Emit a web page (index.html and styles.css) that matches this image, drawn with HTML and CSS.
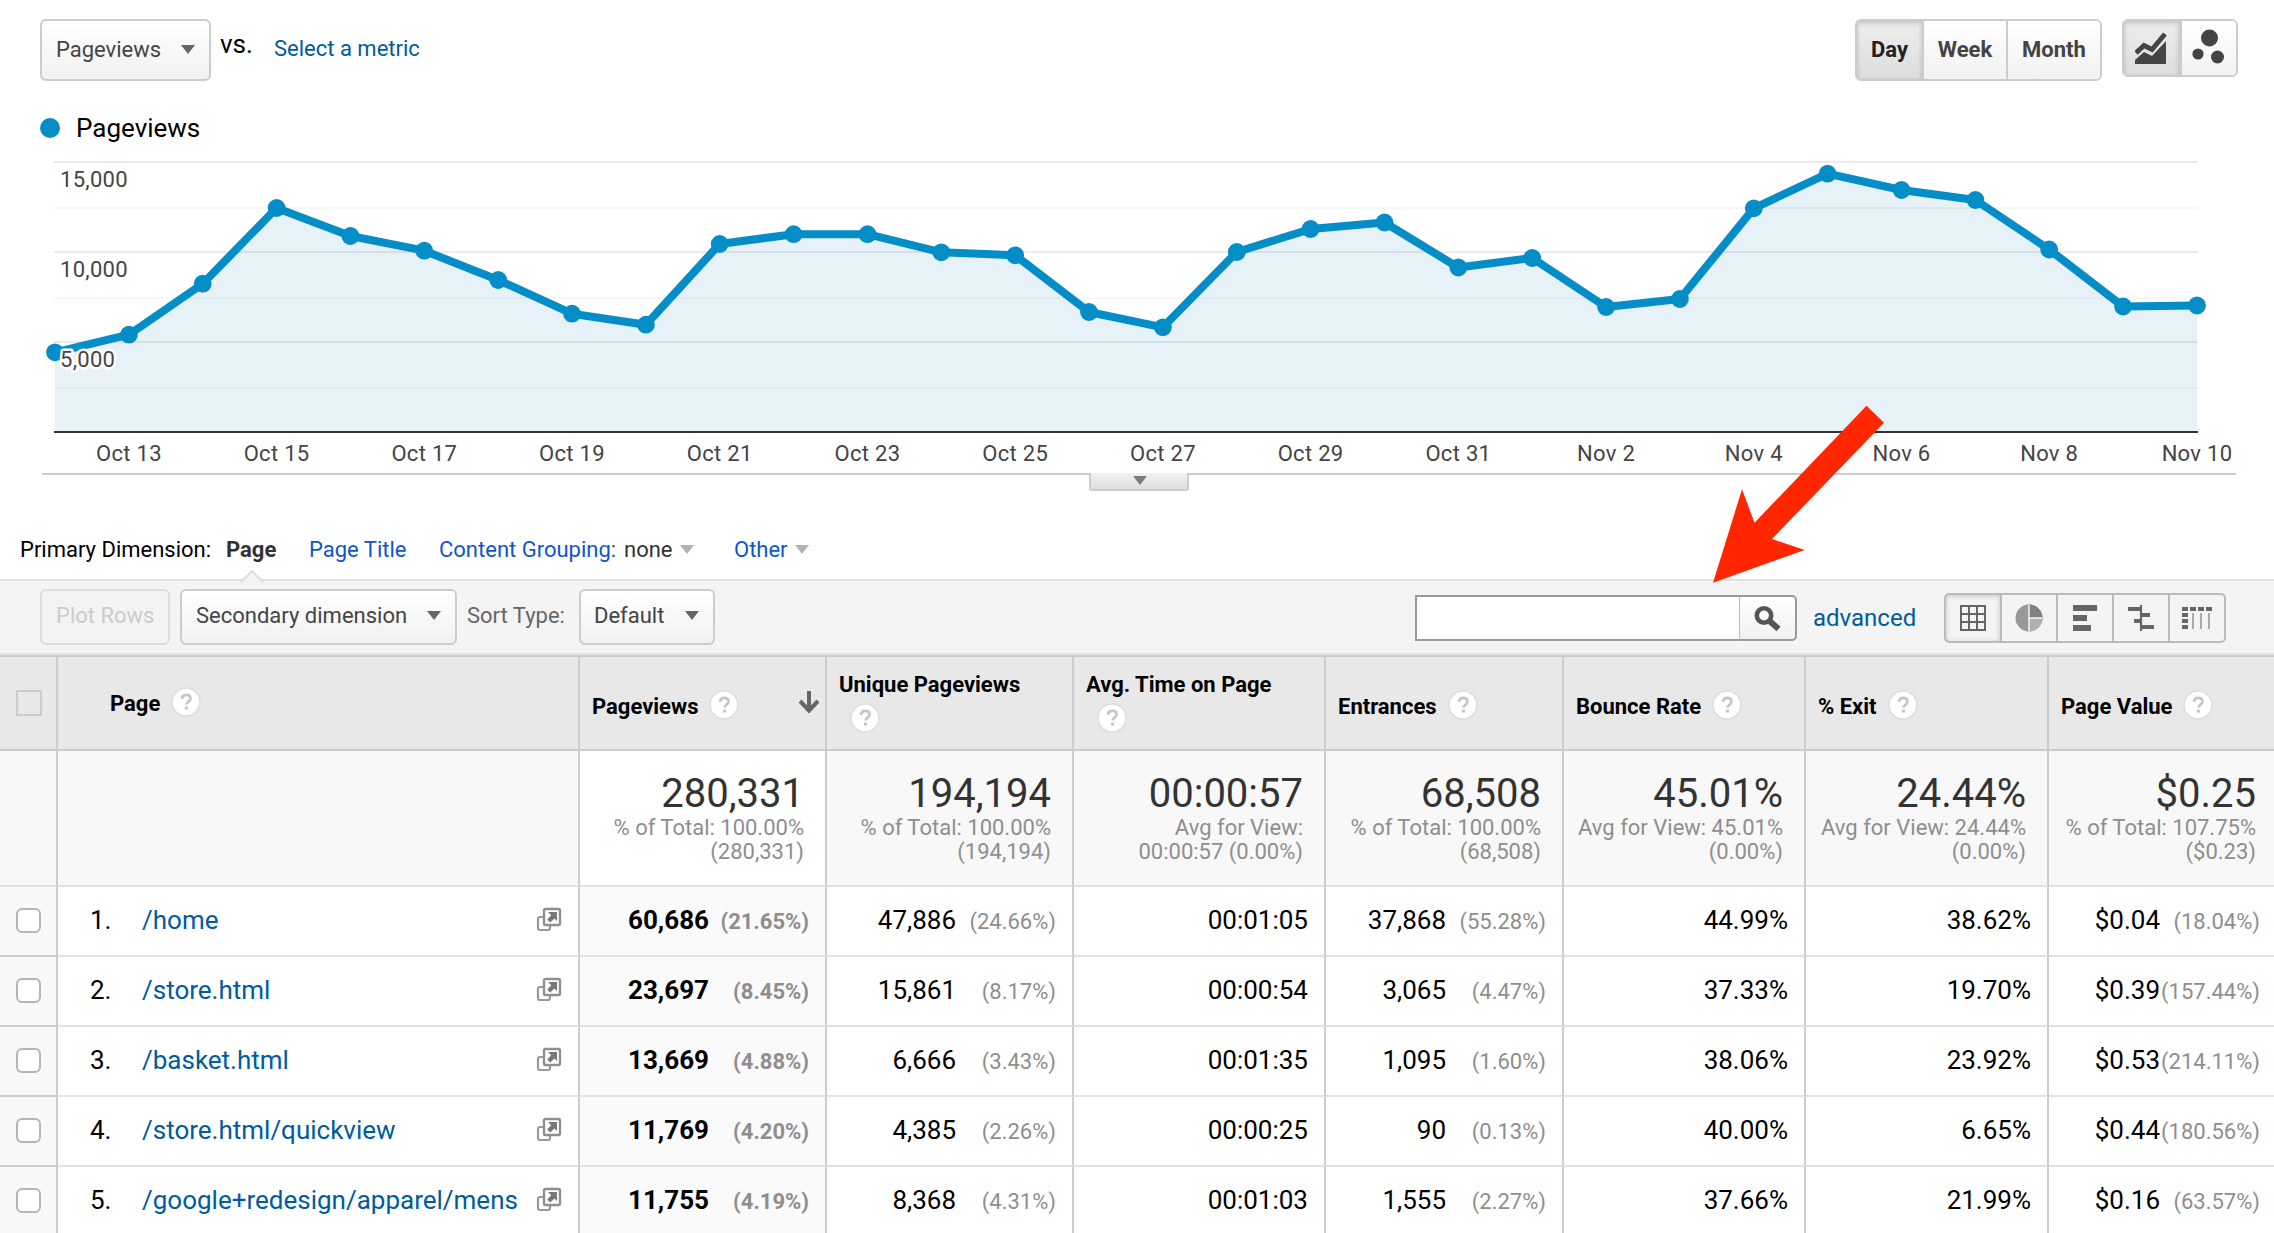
FILE: index.html
```html
<!DOCTYPE html>
<html lang="en">
<head>
    <meta charset="UTF-8">
    <title>Pages - Analytics</title>
    <link rel="stylesheet" href="styles.css">
</head>
<body>
    <!-- shared icons -->
    <svg class="sprite" width="0" height="0">
        <symbol id="icon-popout" viewBox="0 0 26 26">
            <path d="M7 10H4a2 2 0 0 0-2 2v9a2 2 0 0 0 2 2h8a2 2 0 0 0 2-2v-3" fill="none" stroke="#9a9a9a" stroke-width="2.200"/>
            <rect x="8" y="2" width="16" height="16" rx="1.5" fill="#fff" stroke="#8f8f8f" stroke-width="2.400"/>
            <path d="M12 5h9v9l-2.600-2.600-4.200 4-3-3 4-4.200z" fill="#777"/>
        </symbol>
        <symbol id="icon-help" viewBox="0 0 30 30">
            <circle cx="15" cy="15" r="14" fill="#fff" stroke="#dedede" stroke-width="1.500"/>
            <path d="M11 11.800c.2-2.600 2-4 4.300-4 2.500 0 4.200 1.400 4.200 3.600 0 3.200-3.900 3.200-3.900 6.200" fill="none" stroke="#c6c6c6" stroke-width="2.700"/>
            <rect x="14" y="19.600" width="3" height="3" fill="#c6c6c6"/>
        </symbol>
    </svg>

    <div class="topbar">
        <button class="btn metric-btn">Pageviews<span class="caret"></span></button>
        <span class="vs">vs.</span>
        <a class="select-metric">Select a metric</a>
        <div class="range-group">
            <button class="range active">Day</button>
            <button class="range week">Week</button>
            <button class="range month">Month</button>
        </div>
        <div class="type-group">
            <div class="type active">
                <svg width="32" height="36" viewBox="0 0 32 36">
                    <path d="M0 35V31l9-8 8 4L31 12V35z" fill="#444"/>
                    <path d="M1 24l8-7.500 8 4L30 5" fill="none" stroke="#444" stroke-width="5"/>
                </svg>
            </div>
            <div class="type">
                <svg width="34" height="36" viewBox="0 0 34 36">
                    <g fill="#444">
                        <circle cx="17.500" cy="9" r="8.500"/>
                        <circle cx="6" cy="25" r="5.600"/>
                        <circle cx="25.500" cy="28" r="6.500"/>
                    </g>
                </svg>
            </div>
        </div>
    </div>

    <div class="legend"><span class="legend-dot"></span>Pageviews</div>

    <svg class="chart" width="2274" height="323" viewBox="0 150 2274 323">
        <defs>
            <marker id="dot" markerUnits="userSpaceOnUse" markerWidth="20" markerHeight="20" refX="10" refY="10">
                <circle cx="10" cy="10" r="8.900" fill="#058dc7"/>
            </marker>
        </defs>
        <g class="grid">
            <path d="M54 162H2198M54 252H2198M54 342H2198"/>
            <path class="minor" d="M54 208H2198M54 298H2198M54 388H2198"/>
        </g>
        <polygon class="area" points="55,432 55,352.300 128.900,334.700 202.700,283.700 276.600,208 350.400,236 424.300,250.700 498.200,280 572,313.700 645.900,324.700 719.700,244 793.600,234.200 867.500,234.200 941.300,252.300 1015.200,255.300 1089,312 1162.900,327.300 1236.800,252 1310.600,229 1384.500,222.500 1458.300,267.500 1532.200,258 1606.100,307 1679.900,299 1753.800,208.300 1827.600,173.700 1901.500,190 1975.400,200 2049.200,249.500 2123.100,306.500 2197,305.500 2197,432"/>
        <path class="axis" d="M54 432H2198"/>
        <polyline class="line" points="55,352.300 128.900,334.700 202.700,283.700 276.600,208 350.400,236 424.300,250.700 498.200,280 572,313.700 645.900,324.700 719.700,244 793.600,234.200 867.500,234.200 941.300,252.300 1015.200,255.300 1089,312 1162.900,327.300 1236.800,252 1310.600,229 1384.500,222.500 1458.300,267.500 1532.200,258 1606.100,307 1679.900,299 1753.800,208.300 1827.600,173.700 1901.500,190 1975.400,200 2049.200,249.500 2123.100,306.500 2197,305.500"/>
        <g class="y-labels">
            <text x="60" y="187">15,000</text>
            <text x="60" y="277">10,000</text>
            <text x="60" y="367">5,000</text>
        </g>
        <g class="x-labels">
            <text x="128.900" y="461">Oct 13</text>
            <text x="276.600" y="461">Oct 15</text>
            <text x="424.300" y="461">Oct 17</text>
            <text x="572" y="461">Oct 19</text>
            <text x="719.700" y="461">Oct 21</text>
            <text x="867.500" y="461">Oct 23</text>
            <text x="1015.200" y="461">Oct 25</text>
            <text x="1162.900" y="461">Oct 27</text>
            <text x="1310.600" y="461">Oct 29</text>
            <text x="1458.300" y="461">Oct 31</text>
            <text x="1606.100" y="461">Nov 2</text>
            <text x="1753.800" y="461">Nov 4</text>
            <text x="1901.500" y="461">Nov 6</text>
            <text x="2049.200" y="461">Nov 8</text>
            <text x="2197" y="461">Nov 10</text>
        </g>
    </svg>

    <div class="divider"><div class="drawer-tab"><span class="caret"></span></div></div>

    <div class="dimensions">
        <span class="dim-label">Primary Dimension:</span>
        <span class="dim-current">Page</span>
        <a class="dim-title">Page Title</a>
        <a class="dim-group">Content Grouping:</a>
        <span class="dim-none">none</span>
        <span class="caret light"></span>
        <a class="dim-other">Other</a>
        <span class="caret light"></span>
    </div>

    <div class="toolbar">
        <svg class="notch" width="24" height="13" viewBox="0 0 24 13"><path d="M1 12L12 1l11 11v1H1z" fill="#f4f4f4"/><path d="M1 12L12 1l11 11" fill="none" stroke="#dedede" stroke-width="2"/></svg>
        <button class="btn tool plot" disabled>Plot Rows</button>
        <button class="btn tool secondary">Secondary dimension<span class="caret"></span></button>
        <span class="sort-label">Sort Type:</span>
        <button class="btn tool default">Default<span class="caret"></span></button>
        <div class="search">
            <input type="text" class="search-input">
            <button class="search-btn">
                <svg width="27" height="25" viewBox="0 0 27 25">
                    <circle cx="10" cy="9.500" r="7.200" fill="none" stroke="#555" stroke-width="4.600"/>
                    <path d="M15 14.500l9.500 8.500" stroke="#555" stroke-width="6"/>
                </svg>
            </button>
        </div>
        <a class="advanced">advanced</a>
        <div class="views">
            <div class="view active">
                <svg width="28" height="28" viewBox="0 0 28 28"><path d="M2 2h24v24H2zM10 2v24M18 2v24M2 10h24M2 18h24" fill="none" stroke="#666" stroke-width="2"/></svg>
            </div>
            <div class="view">
                <svg width="28" height="28" viewBox="0 0 28 28">
                    <circle cx="14" cy="14" r="13.500" fill="#999"/>
                    <path d="M14 14V.5A13.500 13.500 0 0 1 27.500 14z" fill="#808080"/>
                    <path d="M14 14h13.500A13.500 13.500 0 0 1 14 27.500z" fill="#b0b0b0"/>
                    <path d="M14 1v26M14 14h13" stroke="#f4f4f4" stroke-width="1.500"/>
                </svg>
            </div>
            <div class="view">
                <svg width="28" height="28" viewBox="0 0 28 28"><path d="M2 1h24v6H2zM2 11h14v6H2zM2 21h18v6H2z" fill="#666"/></svg>
            </div>
            <div class="view">
                <svg width="28" height="28" viewBox="0 0 28 28"><path d="M14 1v26" stroke="#666" stroke-width="2.200"/><path d="M1 5h13M14 11h9M7 17h7M14 23h13" fill="none" stroke="#666" stroke-width="4"/></svg>
            </div>
            <div class="view">
                <svg width="32" height="28" viewBox="0 0 32 28">
                    <path d="M1 5h30" stroke="#666" stroke-width="4" stroke-dasharray="6 2"/>
                    <path d="M4 9v16" stroke="#666" stroke-width="6" stroke-dasharray="4 2"/>
                    <path d="M12 9v16M20 9v16M28 9v16" stroke="#aaa" stroke-width="2"/>
                </svg>
            </div>
        </div>
    </div>

    <table class="report">
        <colgroup>
            <col class="c-check"><col class="c-page"><col class="c-views"><col class="c-unique"><col class="c-time"><col class="c-entr"><col class="c-bounce"><col class="c-exit"><col class="c-value">
        </colgroup>
        <thead>
            <tr>
                <th><span class="head-check"></span></th>
                <th class="h-page"><div class="head">Page<svg class="help"><use href="#icon-help"/></svg></div></th>
                <th><div class="head">Pageviews<svg class="help"><use href="#icon-help"/></svg>
                    <svg class="sort" width="22" height="24" viewBox="0 0 22 24"><path d="M11 0v19M2 10l9 9.500 9-9.500" fill="none" stroke="#666" stroke-width="4"/></svg></div></th>
                <th><div class="head two">Unique Pageviews<svg class="help"><use href="#icon-help"/></svg></div></th>
                <th><div class="head two">Avg. Time on Page<svg class="help"><use href="#icon-help"/></svg></div></th>
                <th><div class="head">Entrances<svg class="help"><use href="#icon-help"/></svg></div></th>
                <th><div class="head">Bounce Rate<svg class="help"><use href="#icon-help"/></svg></div></th>
                <th><div class="head">% Exit<svg class="help"><use href="#icon-help"/></svg></div></th>
                <th><div class="head">Page Value<svg class="help"><use href="#icon-help"/></svg></div></th>
            </tr>
        </thead>
        <tbody>
            <tr class="summary">
                <td></td>
                <td></td>
                <td class="sorted"><b>280,331</b>% of Total: 100.00%<br>(280,331)</td>
                <td><b>194,194</b>% of Total: 100.00%<br>(194,194)</td>
                <td><b>00:00:57</b>Avg for View:<br>00:00:57 (0.00%)</td>
                <td><b>68,508</b>% of Total: 100.00%<br>(68,508)</td>
                <td><b>45.01%</b>Avg for View: 45.01%<br>(0.00%)</td>
                <td><b>24.44%</b>Avg for View: 24.44%<br>(0.00%)</td>
                <td><b>$0.25</b>% of Total: 107.75%<br>($0.23)</td>
            </tr>
            <tr class="row">
                <td class="check"><span class="box"></span></td>
                <td><div class="page"><span class="num">1.</span><a>/home</a><svg class="popout"><use href="#icon-popout"/></svg></div></td>
                <td class="sorted">60,686<span class="pct">(21.65%)</span></td>
                <td>47,886<span class="pct">(24.66%)</span></td>
                <td>00:01:05</td>
                <td>37,868<span class="pct">(55.28%)</span></td>
                <td>44.99%</td>
                <td>38.62%</td>
                <td>$0.04<span class="pct">(18.04%)</span></td>
            </tr>
            <tr class="row">
                <td class="check"><span class="box"></span></td>
                <td><div class="page"><span class="num">2.</span><a>/store.html</a><svg class="popout"><use href="#icon-popout"/></svg></div></td>
                <td class="sorted">23,697<span class="pct">(8.45%)</span></td>
                <td>15,861<span class="pct">(8.17%)</span></td>
                <td>00:00:54</td>
                <td>3,065<span class="pct">(4.47%)</span></td>
                <td>37.33%</td>
                <td>19.70%</td>
                <td>$0.39<span class="pct">(157.44%)</span></td>
            </tr>
            <tr class="row">
                <td class="check"><span class="box"></span></td>
                <td><div class="page"><span class="num">3.</span><a>/basket.html</a><svg class="popout"><use href="#icon-popout"/></svg></div></td>
                <td class="sorted">13,669<span class="pct">(4.88%)</span></td>
                <td>6,666<span class="pct">(3.43%)</span></td>
                <td>00:01:35</td>
                <td>1,095<span class="pct">(1.60%)</span></td>
                <td>38.06%</td>
                <td>23.92%</td>
                <td>$0.53<span class="pct">(214.11%)</span></td>
            </tr>
            <tr class="row">
                <td class="check"><span class="box"></span></td>
                <td><div class="page"><span class="num">4.</span><a>/store.html/quickview</a><svg class="popout"><use href="#icon-popout"/></svg></div></td>
                <td class="sorted">11,769<span class="pct">(4.20%)</span></td>
                <td>4,385<span class="pct">(2.26%)</span></td>
                <td>00:00:25</td>
                <td>90<span class="pct">(0.13%)</span></td>
                <td>40.00%</td>
                <td>6.65%</td>
                <td>$0.44<span class="pct">(180.56%)</span></td>
            </tr>
            <tr class="row">
                <td class="check"><span class="box"></span></td>
                <td><div class="page"><span class="num">5.</span><a>/google+redesign/apparel/mens</a><svg class="popout"><use href="#icon-popout"/></svg></div></td>
                <td class="sorted">11,755<span class="pct">(4.19%)</span></td>
                <td>8,368<span class="pct">(4.31%)</span></td>
                <td>00:01:03</td>
                <td>1,555<span class="pct">(2.27%)</span></td>
                <td>37.66%</td>
                <td>21.99%</td>
                <td>$0.16<span class="pct">(63.57%)</span></td>
            </tr>
        </tbody>
    </table>

    <!-- arrow pointing at the search box -->
    <svg class="arrow" width="174" height="180" viewBox="1712 404 174 180">
        <polygon points="1866.500,405.700 1884,422.700 1772,539 1804.700,550 1713,582.700 1742,489.300 1754.500,522.700" fill="#ff2600"/>
    </svg>
</body>
</html>
```
FILE: styles.css
```css
* {
    box-sizing: border-box;
}
body {
    margin: 0;
    width: 2274px;
    height: 1233px;
    overflow: hidden;
    position: relative;
    background: #fff;
    font-family: Roboto, "Liberation Sans", sans-serif;
    font-size: 22px;
    color: #000;
}
button {
    font-family: inherit;
    font-size: 22px;
    margin: 0;
    white-space: nowrap;
}
a {
    color: #005c9c;
}
.sprite {
    position: absolute;
}
.caret {
    width: 0;
    height: 0;
    flex: none;
    border: 7.5px solid transparent;
    border-top: 9px solid #666;
    border-bottom: 0;
}
.caret.light {
    border-top-color: #b3b3b3;
}
.btn {
    display: flex;
    align-items: center;
    justify-content: space-between;
    border: 2px solid #ccc;
    border-radius: 6px;
    background: linear-gradient(#fff, #f1f1f1);
    color: #444;
    padding: 0 14px;
}

/* top bar */
.topbar {
    display: flex;
    align-items: flex-start;
    height: 107px;
    padding: 19px 36px 0 40px;
}
.metric-btn {
    width: 171px;
    height: 62px;
    padding-bottom: 2px;
}
.vs {
    font-size: 26px;
    line-height: 30px;
    margin: 10px 0 0 9px;
    width: 54px;
}
.select-metric {
    line-height: 30px;
    margin-top: 15px;
}
.range-group {
    display: flex;
    width: 247px;
    height: 62px;
    margin-left: auto;
    border: 2px solid #ccc;
    border-radius: 6px;
    overflow: hidden;
}
.range {
    width: 67px;
    border: 0;
    border-right: 2px solid #ccc;
    background: linear-gradient(#fff, #f1f1f1);
    color: #444;
    font-weight: 700;
    padding: 0 0 2px;
}
.range.week {
    width: 84px;
}
.range.month {
    flex: 1;
    border-right: 0;
}
.range.active,
.type.active {
    background: linear-gradient(#eee, #ddd);
    box-shadow: inset 0 2px 5px rgba(0, 0, 0, 0.2);
    color: #222;
}
.type-group {
    display: flex;
    width: 116px;
    height: 58px;
    margin-left: 20px;
    border: 2px solid #ccc;
    border-radius: 6px;
    overflow: hidden;
}
.type {
    flex: 1;
    display: flex;
    align-items: center;
    justify-content: center;
    background: linear-gradient(#fff, #f3f3f3);
}
.type.active {
    border-right: 3px solid #ccc;
}
.type svg {
    margin-top: -2px;
}

/* chart */
.legend {
    display: flex;
    align-items: center;
    height: 43px;
    padding: 0 0 2px 40px;
    font-size: 26px;
}
.legend-dot {
    width: 20px;
    height: 20px;
    border-radius: 50%;
    background: #058dc7;
    margin-right: 16px;
}
.chart {
    display: block;
}
.grid path {
    stroke: #ebebeb;
    stroke-width: 2;
}
.grid .minor {
    stroke: #f7f7f7;
}
.area {
    fill: rgba(13, 128, 190, 0.1);
}
.axis {
    stroke: #333;
    stroke-width: 2;
}
.line {
    fill: none;
    stroke: #058dc7;
    stroke-width: 8;
    stroke-linejoin: round;
    marker-start: url(#dot);
    marker-mid: url(#dot);
    marker-end: url(#dot);
}
.y-labels,
.x-labels {
    fill: #444;
    letter-spacing: 0.3px;
}
.y-labels {
    stroke: #fff;
    stroke-width: 5;
    stroke-linejoin: round;
    paint-order: stroke;
}
.x-labels {
    text-anchor: middle;
}
.divider {
    height: 58px;
    margin: 0 38px 0 42px;
    border-top: 2px solid #ccc;
}
.drawer-tab {
    display: flex;
    justify-content: center;
    width: 100px;
    height: 18px;
    margin: -2px 0 0 1047px;
    padding: 3px 0 0 1px;
    border: 2px solid #ccc;
    border-top: 0;
    border-radius: 0 0 3px 3px;
    background: linear-gradient(#f2f2f2, #dedede);
}
.drawer-tab .caret {
    border-top-color: #7d7d7d;
}

/* primary dimension */
.dimensions {
    display: flex;
    align-items: center;
    height: 48px;
    padding: 0 0 11px 20px;
}
.dimensions a {
    color: #15c;
}
.dim-label {
    width: 206px;
}
.dim-current {
    width: 83px;
    font-weight: 700;
    color: #333;
}
.dim-title {
    width: 130px;
}
.dim-group {
    width: 185px;
}
.dim-none {
    width: 56px;
    color: #333;
}
.dim-other {
    width: 61px;
    margin-left: 40px;
}

/* toolbar */
.toolbar {
    display: flex;
    align-items: center;
    position: relative;
    height: 76px;
    padding: 0 48px 0 40px;
    border-top: 2px solid #e2e2e2;
    border-bottom: 2px solid #e2e2e2;
    background: #f4f4f4;
}
.notch {
    position: absolute;
    left: 240px;
    top: -11px;
}
.tool {
    height: 56px;
    padding-bottom: 4px;
}
.plot {
    width: 130px;
    border-color: #ddd;
    background: #f3f3f3;
    color: #ccc;
}
.secondary {
    width: 277px;
    margin-left: 10px;
}
.sort-label {
    width: 112px;
    margin-left: 10px;
    padding-bottom: 3px;
    color: #666;
}
.default {
    width: 136px;
    padding-left: 13px;
}
.search {
    display: flex;
    margin-left: auto;
    margin-top: 2px;
    height: 46px;
}
.search-input {
    width: 325px;
    border: 2px solid #999;
    border-right: 1px solid #bbb;
    background: #fff;
    padding: 0 8px;
}
.search-btn {
    width: 57px;
    border: 2px solid #999;
    border-left: 0;
    border-radius: 0 5px 5px 0;
    background: linear-gradient(#fff, #f1f1f1);
    padding: 5px 0 0;
}
.advanced {
    width: 131px;
    margin-left: 16px;
    font-size: 24px;
    margin-top: 2px;
}
.views {
    display: flex;
    width: 282px;
    height: 50px;
    margin-top: 2px;
    border: 2px solid #bbb;
    border-radius: 5px;
}
.view {
    flex: 1;
    display: flex;
    align-items: center;
    justify-content: center;
    border-right: 2px solid #bbb;
}
.view:last-child {
    border-right: 0;
}
.view.active {
    box-shadow: inset 0 1px 5px rgba(0, 0, 0, 0.2);
}

/* report table */
.report {
    table-layout: fixed;
    width: 2274px;
    border-collapse: separate;
    border-spacing: 0;
}
.c-check { width: 58px; }
.c-page { width: 522px; }
.c-views { width: 247px; }
.c-unique { width: 247px; }
.c-time { width: 252px; }
.c-entr { width: 238px; }
.c-bounce { width: 242px; }
.c-exit { width: 243px; }
.c-value { width: 225px; }

.report th,
.report td {
    padding: 0;
    border-right: 2px solid #ccc;
}
.report th:last-child,
.report td:last-child {
    border-right: 0;
}
.report th {
    height: 96px;
    border-top: 2px solid #ccc;
    border-bottom: 2px solid #ccc;
    background: #e8e8e8;
    text-align: left;
}
.head {
    display: flex;
    align-items: center;
    padding: 7px 5px 0 12px;
    white-space: nowrap;
}
.h-page .head {
    padding: 0 0 0 52px;
}
.head.two {
    display: block;
    line-height: 26px;
    padding: 0 5px 1px 12px;
}
.help {
    width: 30px;
    height: 30px;
    flex: none;
    margin: -3px 0 0 11px;
}
.two .help {
    display: block;
    margin: 5px 0 0 11px;
}
.sort {
    margin: -8px 0 0 auto;
}
.head-check {
    display: block;
    width: 26px;
    height: 26px;
    margin-left: 16px;
    border: 2px solid #ccc;
}
.summary td {
    height: 136px;
    padding: 0 21px 0 0;
    border-bottom: 2px solid #e2e2e2;
    background: #f8f8f8;
    color: #8e8e8e;
    text-align: right;
    line-height: 24px;
}
.summary b {
    display: block;
    font-size: 40px;
    font-weight: 400;
    line-height: 44px;
    color: #333;
}
.summary td.sorted {
    background: #fff;
}
.row td {
    height: 70px;
    padding: 0 16px 2px 0;
    border-bottom: 2px solid #e2e2e2;
    font-size: 26px;
    text-align: right;
    white-space: nowrap;
}
.row td.check {
    background: #f8f8f8;
    border-bottom-color: #ccc;
    padding: 0 0 1px 16px;
}
.row td.sorted {
    background: #fafafa;
    font-weight: 700;
}
.row td:last-child {
    padding-right: 14px;
}
.summary td:last-child {
    padding-right: 18px;
}
.pct {
    display: inline-block;
    width: 100px;
    font-size: 22px;
    color: #8e8e8e;
}
.box {
    display: block;
    width: 25px;
    height: 25px;
    border: 2px solid #b5b5b5;
    border-radius: 6px;
    background: #fff;
}
.page {
    display: flex;
    align-items: center;
    text-align: left;
}
.num {
    width: 52px;
    margin-left: 32px;
}
.popout {
    width: 26px;
    height: 26px;
    margin-left: auto;
}
.arrow {
    position: absolute;
    left: 1712px;
    top: 404px;
}
```
